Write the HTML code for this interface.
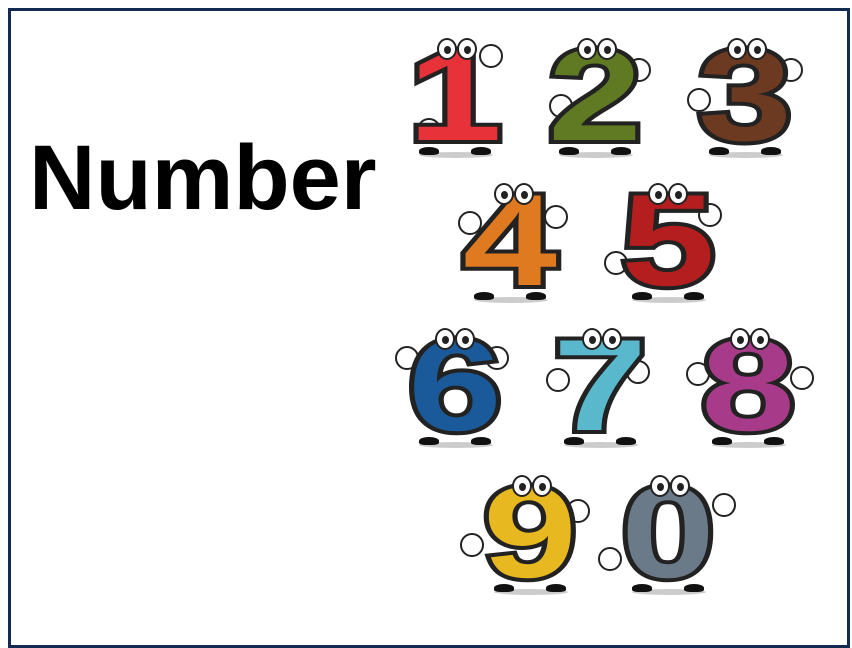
<!DOCTYPE html>
<html><head><meta charset="utf-8"><style>
html,body{margin:0;padding:0;background:#fff;}
body{width:852px;height:648px;position:relative;overflow:hidden;font-family:"Liberation Sans",sans-serif;}
.frame{position:absolute;left:8px;top:8px;width:836px;height:634px;border:3px solid #132b50;box-sizing:content-box;}
.title{position:absolute;left:29px;top:126px;font-size:92px;font-weight:bold;color:#000;letter-spacing:0;}
.d{position:absolute;width:100px;height:130px;}
.d .n{position:absolute;left:0;top:0;width:100px;text-align:center;font-size:130px;font-weight:bold;line-height:130px;-webkit-text-stroke:8px #222;paint-order:stroke fill;transform:scaleX(1.3);}
.d .eye{position:absolute;top:8px;width:16px;height:18px;border:2px solid #222;border-radius:50%;background:#fff;}
.d .eye::after{content:"";position:absolute;left:5px;top:6px;width:7px;height:8px;border-radius:50%;background:#222;}
.d .shadow{position:absolute;left:14px;top:122px;width:74px;height:6px;border-radius:50%;background:#ccc;}
.d .foot{position:absolute;top:117px;width:20px;height:8px;border-radius:50% 50% 30% 30%;background:#111;}
.d .hand{position:absolute;width:20px;height:20px;border:2px solid #222;border-radius:50%;background:#fff;}
</style></head><body>
<div class="frame"></div>
<div class="title">Number</div>

<div class="d" style="left:405px;top:30px"><div class="shadow"></div><div class="foot" style="left:14px"></div><div class="foot" style="left:66px"></div><div class="hand" style="left:12px;top:88px"></div><div class="hand" style="left:74px;top:14px"></div><div class="n" style="color:#e8323a">1</div><div class="eye" style="left:32px"></div><div class="eye" style="left:52px"></div></div>
<div class="d" style="left:545px;top:30px"><div class="shadow"></div><div class="foot" style="left:14px"></div><div class="foot" style="left:66px"></div><div class="hand" style="left:4px;top:64px"></div><div class="hand" style="left:82px;top:28px"></div><div class="n" style="color:#5f7a22">2</div><div class="eye" style="left:32px"></div><div class="eye" style="left:52px"></div></div>
<div class="d" style="left:695px;top:30px"><div class="shadow"></div><div class="foot" style="left:14px"></div><div class="foot" style="left:66px"></div><div class="hand" style="left:-8px;top:58px"></div><div class="hand" style="left:84px;top:28px"></div><div class="n" style="color:#6b3a20">3</div><div class="eye" style="left:32px"></div><div class="eye" style="left:52px"></div></div>

<div class="d" style="left:460px;top:175px"><div class="shadow"></div><div class="foot" style="left:14px"></div><div class="foot" style="left:66px"></div><div class="hand" style="left:-2px;top:36px"></div><div class="hand" style="left:84px;top:30px"></div><div class="n" style="color:#e07a20">4</div><div class="eye" style="left:34px"></div><div class="eye" style="left:54px"></div></div>
<div class="d" style="left:618px;top:175px"><div class="shadow"></div><div class="foot" style="left:14px"></div><div class="foot" style="left:66px"></div><div class="hand" style="left:-14px;top:76px"></div><div class="hand" style="left:80px;top:28px"></div><div class="n" style="color:#b41e1e">5</div><div class="eye" style="left:30px"></div><div class="eye" style="left:50px"></div></div>

<div class="d" style="left:405px;top:320px"><div class="shadow"></div><div class="foot" style="left:14px"></div><div class="foot" style="left:66px"></div><div class="hand" style="left:-10px;top:26px"></div><div class="hand" style="left:80px;top:26px"></div><div class="n" style="color:#1a5a9a">6</div><div class="eye" style="left:30px"></div><div class="eye" style="left:50px"></div></div>
<div class="d" style="left:550px;top:320px"><div class="shadow"></div><div class="foot" style="left:14px"></div><div class="foot" style="left:66px"></div><div class="hand" style="left:-4px;top:48px"></div><div class="hand" style="left:76px;top:40px"></div><div class="n" style="color:#5ab8cc">7</div><div class="eye" style="left:32px"></div><div class="eye" style="left:52px"></div></div>
<div class="d" style="left:698px;top:320px"><div class="shadow"></div><div class="foot" style="left:14px"></div><div class="foot" style="left:66px"></div><div class="hand" style="left:-12px;top:42px"></div><div class="hand" style="left:92px;top:46px"></div><div class="n" style="color:#a83a8a">8</div><div class="eye" style="left:32px"></div><div class="eye" style="left:52px"></div></div>

<div class="d" style="left:480px;top:467px"><div class="shadow"></div><div class="foot" style="left:14px"></div><div class="foot" style="left:66px"></div><div class="hand" style="left:-20px;top:66px"></div><div class="hand" style="left:86px;top:32px"></div><div class="n" style="color:#e8b820">9</div><div class="eye" style="left:32px"></div><div class="eye" style="left:52px"></div></div>
<div class="d" style="left:618px;top:467px"><div class="shadow"></div><div class="foot" style="left:14px"></div><div class="foot" style="left:66px"></div><div class="hand" style="left:-20px;top:80px"></div><div class="hand" style="left:94px;top:26px"></div><div class="n" style="color:#6b7a88">0</div><div class="eye" style="left:32px"></div><div class="eye" style="left:52px"></div></div>
</body></html>
